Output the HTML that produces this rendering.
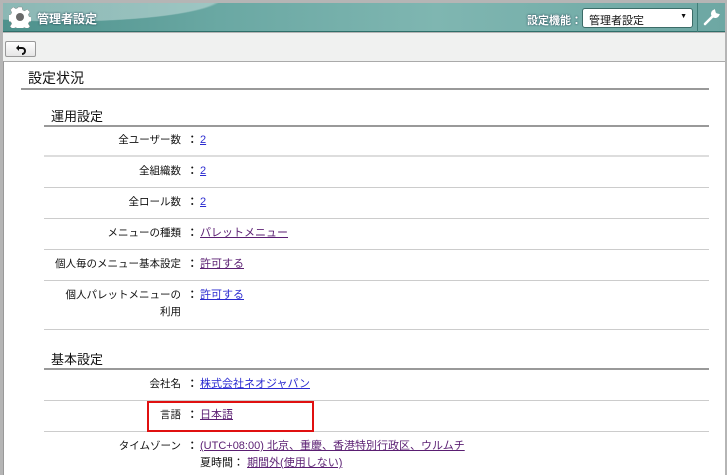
<!DOCTYPE html>
<html><head><meta charset="utf-8"><style>
*{margin:0;padding:0;box-sizing:border-box}
body{width:727px;height:475px;overflow:hidden;background:#b5b5b5;font-family:"Liberation Sans","Noto Sans CJK JP",sans-serif;font-size:10.5px;color:#111;position:relative}
.hdr{position:absolute;left:3px;top:3px;right:2px;height:29px;background:linear-gradient(90deg,#4d918c 0%,#6aa8a3 30%,#7fb6b1 60%,#6da7a3 100%);border-bottom:1px solid #2f6f6a}
.sw{position:absolute;left:0;top:0;width:330px;height:29px;background:radial-gradient(ellipse 260px 40px at 60px -6px,rgba(255,255,255,.35) 60%,rgba(255,255,255,0) 62%)}
.title{position:absolute;left:34px;top:7px;color:#fff;font-weight:bold;font-size:12px;text-shadow:0 0 2px #134}
.lab{position:absolute;left:524px;top:9px;color:#fff;font-weight:bold;font-size:11px;text-shadow:0 0 2px #134}
.sel{position:absolute;left:579px;top:5px;width:111px;height:20px;background:#fff;border:1px solid #3c6c68;border-radius:3px;font-size:11px;padding:3px 6px;color:#111}
.sel:after{content:"▼";position:absolute;right:5px;top:4px;font-size:7px}
.sep{position:absolute;left:694px;top:0;width:1px;height:29px;background:#3f7d78}
.tb{position:absolute;left:3px;top:33px;right:2px;height:28px;background:#f0f1f0}
.bk{position:absolute;left:2px;top:8px;width:31px;height:16px;background:linear-gradient(#fff,#e5e5e5);border:1px solid #999;border-radius:2px}
.ct{position:absolute;left:3px;top:61px;right:2px;bottom:0;background:#fff;border-top:1px solid #aaa;border-left:1px solid #999}
.a{position:absolute}
.h1{left:24px;top:6px;font-size:14px}
.l1{left:17px;top:26px;width:688px;height:2px;background:#999}
.h2{left:47px;font-size:13px}
.l2{left:40px;width:665px;height:2px;background:#999}
.rs{left:40px;width:665px;height:1px;background:#ccc}
.k{width:150px;left:27px;text-align:right;line-height:17px}
.c{left:183px;font-weight:bold}
.v{left:196px;line-height:17px;font-size:11px}
a{color:#2b2bd0;text-decoration:underline}
a.p{color:#5a1e72}
</style></head><body>
<div class="hdr"><div class="sw"></div>
<svg style="position:absolute;left:6px;top:3px" width="22" height="22" viewBox="0 0 22 22"><g fill="#fff" stroke="#888" stroke-width=".5"><path d="M9 1h4l.6 3 2 .9 2.6-1.7 2.8 2.8-1.700 2.6.9 2 3 .6v4l-3 .6-.9 2 1.7 2.6-2.8 2.8-2.6-1.7-2 .9-.6 3H9l-.6-3-2-.9-2.6 1.7-2.8-2.8 1.7-2.6-.9-2-3-.6V9l3-.6.9-2L1.4 3.8 4.2 1l2.6 1.7 2-.9z"/></g><circle cx="11" cy="11" r="4" fill="#6a6a6a"/></svg>
<div class="title">管理者設定</div>
<div class="lab">設定機能：</div>
<div class="sel">管理者設定</div>
<div class="sep"></div>
<svg style="position:absolute;left:700px;top:5px" width="18" height="18" viewBox="0 0 18 18"><path d="M2 16l8-8M11 3a3 3 0 1 0 4 4l-2-.5-1.5-1.5z" stroke="#fff" stroke-width="2.6" fill="#fff" stroke-linecap="round"/></svg>
</div>
<div class="tb"><div class="bk"><svg style="position:absolute;left:9px;top:2px" width="12" height="11" viewBox="0 0 12 11"><path d="M4 1L1 4l3 3z" fill="#111"/><path d="M3 4h4a3 3 0 0 1 0 6" stroke="#111" stroke-width="2" fill="none"/></svg></div></div>
<div class="ct">
<div class="a h1">設定状況</div><div class="a l1"></div>
<div class="a h2" style="top:44px">運用設定</div><div class="a l2" style="top:63px"></div>
<div class="a k" style="top:70px">全ユーザー数</div><div class="a c" style="top:70px;line-height:17px">：</div><div class="a v" style="top:70px"><a>2</a></div>
<div class="a rs" style="top:93px;height:2px;background:#ddd"></div>
<div class="a k" style="top:101px">全組織数</div><div class="a c" style="top:101px;line-height:17px">：</div><div class="a v" style="top:101px"><a>2</a></div>
<div class="a rs" style="top:125px"></div>
<div class="a k" style="top:132px">全ロール数</div><div class="a c" style="top:132px;line-height:17px">：</div><div class="a v" style="top:132px"><a>2</a></div>
<div class="a rs" style="top:156px"></div>
<div class="a k" style="top:163px">メニューの種類</div><div class="a c" style="top:163px;line-height:17px">：</div><div class="a v" style="top:163px"><a class="p">パレットメニュー</a></div>
<div class="a rs" style="top:187px"></div>
<div class="a k" style="top:194px">個人毎のメニュー基本設定</div><div class="a c" style="top:194px;line-height:17px">：</div><div class="a v" style="top:194px"><a class="p">許可する</a></div>
<div class="a rs" style="top:218px"></div>
<div class="a k" style="top:225px">個人パレットメニューの<br>利用</div><div class="a c" style="top:225px;line-height:17px">：</div><div class="a v" style="top:225px"><a>許可する</a></div>
<div class="a rs" style="top:267px"></div>
<div class="a h2" style="top:287px">基本設定</div><div class="a l2" style="top:306px"></div>
<div class="a k" style="top:314px">会社名</div><div class="a c" style="top:314px;line-height:17px">：</div><div class="a v" style="top:314px"><a>株式会社ネオジャパン</a></div>
<div class="a rs" style="top:338px"></div>
<div class="a k" style="top:345px">言語</div><div class="a c" style="top:345px;line-height:17px">：</div><div class="a v" style="top:345px"><a class="p">日本語</a></div>
<div class="a rs" style="top:369px"></div>
<div class="a" style="left:143px;top:339px;width:167px;height:31px;border:2px solid #e01010"></div>
<div class="a k" style="top:376px">タイムゾーン</div><div class="a c" style="top:376px;line-height:17px">：</div><div class="a v" style="top:376px"><a class="p">(UTC+08:00) 北京、重慶、香港特別行政区、ウルムチ</a><br>夏時間： <a class="p">期間外(使用しない)</a></div>
</div>
</body></html>
